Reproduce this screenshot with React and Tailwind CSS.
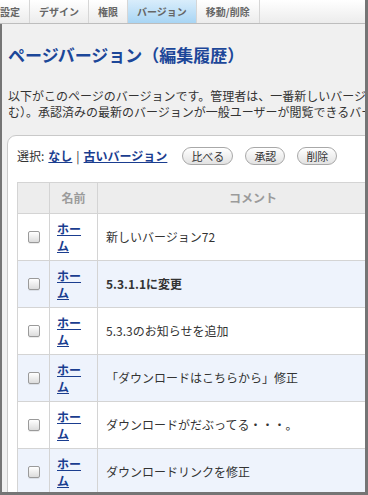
const tabs = ["設定", "デザイン", "権限", "バージョン", "移動/削除"];

const rows = [
  { comment: "新しいバージョン72" },
  { comment: "5.3.1.1に変更", bold: true },
  { comment: "5.3.3のお知らせを追加" },
  { comment: "「ダウンロードはこちらから」修正" },
  { comment: "ダウンロードがだぶってる・・・。" },
  { comment: "ダウンロードリンクを修正" },
];

const font = { fontFamily: '"Noto Sans CJK JP", "Noto Sans", sans-serif' };

const Checkbox = () => (
  <div className="mx-auto h-[12px] w-[12px] rounded-[2px] border border-[#9a9a9a] bg-gradient-to-b from-white to-[#dcdcdc] shadow-[0_1px_0_rgba(0,0,0,0.08)]" />
);

const PillButton = ({ children }) => (
  <button className="flex h-[18px] items-center rounded-full border border-[#a8a8a8] bg-gradient-to-b from-white to-[#e2e2e2] px-[8px] text-[11px] leading-none text-[#333]">
    {children}
  </button>
);

export default function App() {
  return (
    <div
      className="h-[495px] w-[368px] overflow-hidden bg-[#757575] pr-[3px]"
      style={font}
    >
      <div className="flex h-[24px] items-stretch border-b border-[#bdbdbd] bg-gradient-to-b from-white to-[#ececec]">
        {tabs.map((t, i) => (
          <div
            key={t}
            className={
              (i === 3
                ? "bg-gradient-to-b from-[#d9edfb] to-[#a8d5f4] "
                : "") +
              (i === 0 ? "pl-0 " : "pl-[9px] ") +
              "flex items-center border-r border-[#d6d6d6] pr-[9px] text-[10px] font-bold leading-none text-[#666]"
            }
          >
            {t}
          </div>
        ))}
      </div>
      <div className="ml-[2px] h-[468px] overflow-hidden bg-[#f0f0f0]">
        <h1 className="ml-[6px] mt-[19px] whitespace-nowrap text-[17px] font-bold leading-[24px] text-[#1c4799]">
          ページバージョン（編集履歴）
        </h1>
        <div className="ml-[6px] mt-[21px] text-[12px] leading-[16px] text-[#333]">
          <p className="whitespace-nowrap">
            以下がこのページのバージョンです。管理者は、一番新しいバージョンを承認するか、古いバージョンに戻すことができます（削除も含
          </p>
          <p className="whitespace-nowrap">
            む）。承認済みの最新のバージョンが一般ユーザーが閲覧できるバージョンになります。
          </p>
        </div>
        <div className="ml-[5px] mt-[15px] w-[420px] rounded-tl-[9px] border border-[#c9c9c9] bg-white pl-[9px] pt-[11px]">
          <div className="flex h-[18px] items-center text-[12px] text-[#333]">
            <span>選択:</span>
            <a className="ml-[4px] font-bold text-[#1a3d8f] underline">なし</a>
            <span className="mx-[4px]">|</span>
            <a className="font-bold text-[#1a3d8f] underline">古いバージョン</a>
            <div className="ml-[15px] flex gap-[12px]">
              <PillButton>比べる</PillButton>
              <PillButton>承認</PillButton>
              <PillButton>削除</PillButton>
            </div>
          </div>
          <table className="mt-[17px] w-[392px] table-fixed border-collapse text-[12px]">
            <colgroup>
              <col className="w-[32px]" />
              <col className="w-[48px]" />
              <col />
            </colgroup>
            <thead>
              <tr className="h-[31px] bg-[#ededed]">
                <th className="border border-[#d4d4d4]" />
                <th className="border border-[#d4d4d4] font-bold text-[#9b9b9b]">
                  名前
                </th>
                <th className="border border-[#d4d4d4] font-bold text-[#9b9b9b]">
                  コメント
                </th>
              </tr>
            </thead>
            <tbody>
              {rows.map((r, i) => (
                <tr
                  key={i}
                  className={
                    "h-[47px] " + (i % 2 === 1 ? "bg-[#eef3fc]" : "bg-white")
                  }
                >
                  <td className="border border-[#d4d4d4]">
                    <Checkbox />
                  </td>
                  <td className="border border-[#d4d4d4] px-[7px]">
                    <a className="block font-bold leading-[17px] text-[#1a3d8f] underline">
                      ホーム
                    </a>
                  </td>
                  <td
                    className={
                      "whitespace-nowrap border border-[#d4d4d4] px-[8px] text-[#333] " +
                      (r.bold ? "font-bold" : "")
                    }
                  >
                    {r.comment}
                  </td>
                </tr>
              ))}
            </tbody>
          </table>
        </div>
      </div>
    </div>
  );
}
